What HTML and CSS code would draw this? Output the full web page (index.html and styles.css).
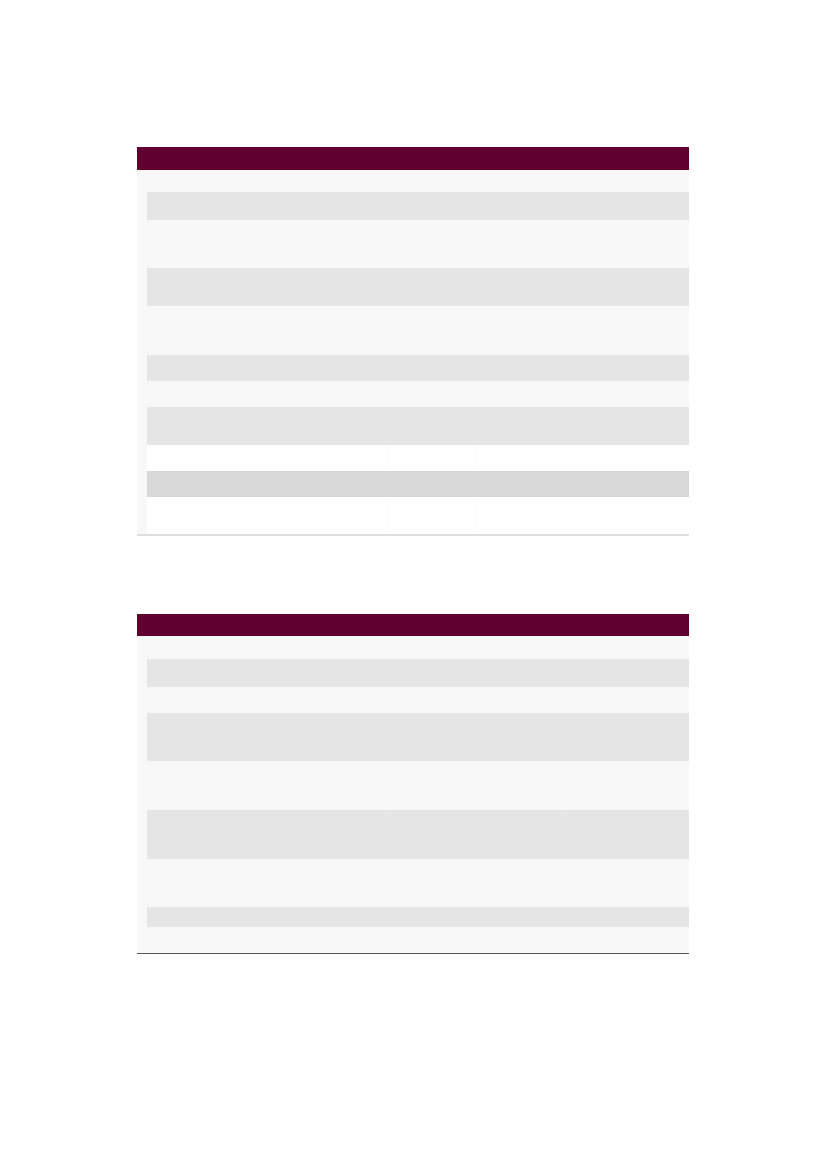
FILE: index.html
```html
<!DOCTYPE html>
<html>
<head>
<meta charset="utf-8">
<link rel="stylesheet" href="styles.css">
</head>
<body>
<div class="page">
  <div class="table t1">
    <div class="head"></div>
    <div class="body">
      <div class="row h22"><span></span><span></span><span></span></div>
      <div class="row gray h28"><span></span><span></span><span></span></div>
      <div class="row h48"><span></span><span></span><span></span></div>
      <div class="row gray h38"><span></span><span></span><span></span></div>
      <div class="row h49"><span></span><span></span><span></span></div>
      <div class="row gray h26"><span></span><span></span><span></span></div>
      <div class="row h26"><span></span><span></span><span></span></div>
      <div class="row gray h38"><span></span><span></span><span></span></div>
      <div class="row white h26"><span></span><span></span><span></span></div>
      <div class="row dark h26"><span></span><span></span><span></span></div>
      <div class="row white h37"><span></span><span></span><span></span></div>
    </div>
  </div>
  <div class="table t2">
    <div class="head"></div>
    <div class="body">
      <div class="row h23"><span></span><span></span><span></span></div>
      <div class="row gray h28"><span></span><span></span><span></span></div>
      <div class="row h26"><span></span><span></span><span></span></div>
      <div class="row gray h48"><span></span><span></span><span></span></div>
      <div class="row h49"><span></span><span></span><span></span></div>
      <div class="row gray h49"><span></span><span></span><span></span></div>
      <div class="row h48"><span></span><span></span><span></span></div>
      <div class="row gray h20"><span></span><span></span><span></span></div>
      <div class="row h26"><span></span><span></span><span></span></div>
    </div>
  </div>
</div>
</body>
</html>
```
FILE: styles.css
```css
html, body {
  margin: 0;
  padding: 0;
  background: #ffffff;
  font-family: "Liberation Sans", Arial, sans-serif;
}
.page {
  display: flex;
  flex-direction: column;
  gap: 78px;
  padding: 147px 0 0 137px;
  width: 552px;
}
.table {
  display: flex;
  flex-direction: column;
  width: 552px;
}
.head {
  height: 23px;
  background: #5f0030;
}
.t2 .head {
  height: 22px;
}
.body {
  display: flex;
  flex-direction: column;
  background: #f7f8f7;
}
.t1 .body {
  border-bottom: 2px solid #dedede;
}
.t2 .body {
  border-bottom: 1px solid #555555;
}
.row {
  display: grid;
  margin-left: 10px;
}
.t1 .row {
  grid-template-columns: 240px 88px 214px;
}
.t2 .row {
  grid-template-columns: 240px 177px 124px;
}
.row span + span {
  border-left: 1px solid transparent;
}
.gray {
  background: #e4e5e4;
}
.gray span + span {
  border-left-color: #e6e7e6;
}
.dark {
  background: #d9d9d9;
}
.dark span + span {
  border-left-color: #dadada;
}
.white {
  background: #ffffff;
}
.white span + span {
  border-left-color: #fcfcfc;
}
.h20 { height: 20px; }
.h22 { height: 22px; }
.h23 { height: 23px; }
.h26 { height: 26px; }
.h28 { height: 28px; }
.h37 { height: 37px; }
.h38 { height: 38px; }
.h48 { height: 48px; }
.h49 { height: 49px; }
```
